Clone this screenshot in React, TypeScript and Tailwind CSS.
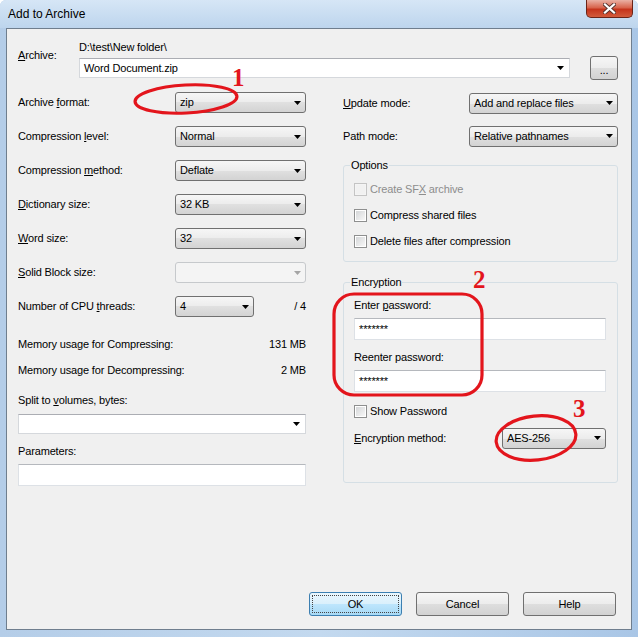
import React from 'react';
import clsx from 'clsx';

const Arrow = ({ disabled }: { disabled?: boolean }) => (
  <svg width="7" height="4" viewBox="0 0 7 4" className="shrink-0">
    <path d="M0 0h7L3.5 4z" fill={disabled ? '#a5a5a5' : '#000'} />
  </svg>
);

const Drop = ({ value, className, disabled }: { value?: string; className: string; disabled?: boolean }) => (
  <div
    className={clsx(
      'flex h-[21px] items-center justify-between rounded-[3px] border pl-[4px] pr-[4px]',
      disabled
        ? 'border-[#c6c9cc] bg-[#f4f4f4]'
        : 'border-[#707070] bg-[linear-gradient(#f6f6f6_0%,#ececec_50%,#e0e0e0_50%,#d3d3d3_100%)]',
      className
    )}
  >
    <span>{value}</span>
    <Arrow disabled={disabled} />
  </div>
);

const Combo = ({ value, className }: { value?: string; className: string }) => (
  <div
    className={clsx(
      'flex h-[20px] items-center justify-between border border-[#d5d8dc] border-t-[#abadb3] bg-white pl-[4px] pr-[5px]',
      className
    )}
  >
    <span>{value}</span>
    <Arrow />
  </div>
);

const Check = ({ label, disabled }: { label: React.ReactNode; disabled?: boolean }) => (
  <div className="flex h-[13px] items-center">
    <div
      className={clsx(
        'h-[13px] w-[13px] shrink-0 border p-[1px]',
        disabled ? 'border-[#c4c4c4] bg-[#f4f4f4]' : 'border-[#8e8f8f] bg-white'
      )}
    >
      <div
        className={clsx(
          'h-full w-full',
          disabled ? 'bg-[#f1f1f1]' : 'bg-[linear-gradient(135deg,#d4d6d8,#f7f7f7)]'
        )}
      />
    </div>
    <span className={clsx('ml-[3px]', disabled && 'text-[#8d8d8d]')}>{label}</span>
  </div>
);

const Button = ({ children, primary }: { children: React.ReactNode; primary?: boolean }) => (
  <div
    className={clsx(
      'flex h-[24px] w-[93px] items-center justify-center rounded-[3px] border',
      primary
        ? 'border-[#3c7fb1] bg-[linear-gradient(#eaf6fd_0%,#d9f0fc_50%,#bee6fd_50%,#a7d9f5_100%)] p-[2px]'
        : 'border-[#707070] bg-[linear-gradient(#f6f6f6_0%,#ececec_50%,#dedede_50%,#d2d2d2_100%)]'
    )}
  >
    {primary ? (
      <div className="flex h-full w-full items-center justify-center border border-dotted border-[#444]">{children}</div>
    ) : (
      children
    )}
  </div>
);

const Field = ({ value }: { value?: string }) => (
  <div className="flex h-[22px] w-full items-center border border-[#dde1e6] border-t-[#b5b8bd] bg-white pl-[4px]">
    {value}
  </div>
);

const CloseButton = () => (
  <div className="mr-[5px] flex h-[18px] w-[47px] items-center justify-center rounded-b-[5px] border border-t-0 border-[#6b2418] bg-[linear-gradient(#eab1a4_0%,#d8644c_45%,#c5341c_55%,#d25b3c_100%)]">
    <svg width="13" height="11" viewBox="0 0 13 11">
      <path d="M2 1.5L11 9.5M11 1.5L2 9.5" stroke="#5a3530" strokeWidth="4" strokeLinecap="square" />
      <path d="M2 1.5L11 9.5M11 1.5L2 9.5" stroke="#fff" strokeWidth="2.2" strokeLinecap="square" />
    </svg>
  </div>
);

export default function App() {
  const leftRows: { label: React.ReactNode; value?: string; disabled?: boolean }[] = [
    { label: <>Archive <u>f</u>ormat:</>, value: 'zip' },
    { label: <>Compression <u>l</u>evel:</>, value: 'Normal' },
    { label: <>Compression <u>m</u>ethod:</>, value: 'Deflate' },
    { label: <><u>D</u>ictionary size:</>, value: '32 KB' },
    { label: <><u>W</u>ord size:</>, value: '32' },
    { label: <><u>S</u>olid Block size:</>, disabled: true },
  ];

  return (
    <div className="relative h-[637px] w-[638px] overflow-hidden rounded-t-[6px] bg-[linear-gradient(90deg,#b4cde8,#c3d9ef_50%,#a9c6e6)] font-['Liberation_Sans',Arial,sans-serif] text-[11px] leading-[13px] tracking-[-0.15px] text-black">
      {/* title bar */}
      <div className="flex h-[28px] items-start justify-between bg-[linear-gradient(#d6e6f6,#bdd5ed)]">
        <span className="ml-[8px] mt-[7px] text-[12px] leading-[14px] tracking-normal">Add to Archive</span>
        <CloseButton />
      </div>

      {/* client area */}
      <div className="mx-[6px] flex h-[602px] flex-col border border-[#6f7e8e] bg-[#f0f0f0] pb-[13px] pl-[11px] pr-[13px] pt-[12px]">
        {/* archive name */}
        <div className="flex items-start">
          <div className="mt-[8px] w-[61px]">
            <u>A</u>rchive:
          </div>
          <div className="flex flex-col">
            <div className="h-[13px]">D:\test\New folder\</div>
            <Combo value="Word Document.zip" className="mt-[4px] w-[491px]" />
          </div>
          <div className="ml-[20px] mt-[15px] flex h-[24px] w-[28px] items-end justify-center rounded-[3px] border border-[#707070] bg-[linear-gradient(#f6f6f6_0%,#ececec_50%,#dedede_50%,#d2d2d2_100%)] pb-[5px] leading-[8px]">
            ...
          </div>
        </div>

        <div className="mt-[12px] flex">
          {/* left column */}
          <div className="flex w-[288px] flex-col">
            <div className="flex flex-col gap-[13px]">
              {leftRows.map((r, i) => (
                <div key={i} className="flex h-[21px] items-center">
                  <div className="w-[157px]">{r.label}</div>
                  <Drop value={r.value} disabled={r.disabled} className="w-[131px]" />
                </div>
              ))}
              <div className="flex h-[21px] items-center">
                <div className="w-[157px]">
                  Number of CPU <u>t</u>hreads:
                </div>
                <Drop value="4" className="w-[79px]" />
                <span className="ml-auto">/ 4</span>
              </div>
            </div>
            <div className="mt-[21px] flex h-[13px] justify-between">
              <span>Memory usage for Compressing:</span>
              <span>131 MB</span>
            </div>
            <div className="mt-[13px] flex h-[13px] justify-between">
              <span>Memory usage for Decompressing:</span>
              <span>2 MB</span>
            </div>
            <div className="mt-[17px] h-[13px]">
              Split to <u>v</u>olumes, bytes:
            </div>
            <Combo className="mt-[7px] w-full" />
            <div className="mt-[11px] h-[13px]">Parameters:</div>
            <div className="mt-[6px]">
              <Field />
            </div>
          </div>

          {/* right column */}
          <div className="ml-[37px] flex w-[275px] flex-col">
            <div className="mt-[1px] flex h-[20px] items-center">
              <div className="w-[126px]">
                <u>U</u>pdate mode:
              </div>
              <Drop value="Add and replace files" className="h-[20px] w-[149px]" />
            </div>
            <div className="mt-[13px] flex h-[20px] items-center">
              <div className="w-[126px]">Path mode:</div>
              <Drop value="Relative pathnames" className="h-[20px] w-[149px]" />
            </div>

            <fieldset className="mt-[13px] rounded-[3px] border border-[#d5dfe5]">
              <legend className="ml-[6px] px-[1px] leading-[13px]">Options</legend>
              <div className="flex flex-col gap-[13px] pb-[13px] pl-[10px] pt-[11px]">
                <Check disabled label={<>Create SF<u>X</u> archive</>} />
                <Check label="Compress shared files" />
                <Check label="Delete files after compression" />
              </div>
            </fieldset>

            <fieldset className="mt-[14px] rounded-[3px] border border-[#d5dfe5]">
              <legend className="ml-[6px] px-[1px] leading-[13px]">Encryption</legend>
              <div className="flex flex-col pb-[34px] pl-[10px] pr-[11px] pt-[10px]">
                <div className="h-[13px]">
                  Enter <u>p</u>assword:
                </div>
                <div className="mt-[6px]">
                  <Field value="*******" />
                </div>
                <div className="mt-[11px] h-[13px]">Reenter password:</div>
                <div className="mt-[6px]">
                  <Field value="*******" />
                </div>
                <div className="mt-[13px]">
                  <Check label="Show Password" />
                </div>
                <div className="mt-[10px] flex h-[20px] items-center justify-between">
                  <span>
                    <u>E</u>ncryption method:
                  </span>
                  <Drop value="AES-256" className="h-[20px] w-[104px]" />
                </div>
              </div>
            </fieldset>
          </div>
        </div>

        {/* buttons */}
        <div className="mr-[2px] mt-auto flex justify-end gap-[14px]">
          <Button primary>OK</Button>
          <Button>Cancel</Button>
          <Button>Help</Button>
        </div>
      </div>

      {/* red annotations drawn over the dialog */}
      <svg className="pointer-events-none absolute left-0 top-0" width="638" height="637" viewBox="0 0 638 637">
        <g fill="none" stroke="#e3151c" strokeWidth="3.2">
          <ellipse cx="186" cy="99" rx="51" ry="14" transform="rotate(-3 186 99)" />
          <rect x="334" y="294" width="148" height="101" rx="20" />
          <ellipse cx="536" cy="438" rx="40" ry="22" transform="rotate(-6 536 438)" />
        </g>
      </svg>
      <span className="pointer-events-none absolute left-[232px] top-[65px] font-['Liberation_Serif',serif] text-[25px] font-bold leading-[25px] text-[#e3151c]">
        1
      </span>
      <span className="pointer-events-none absolute left-[473px] top-[267px] font-['Liberation_Serif',serif] text-[25px] font-bold leading-[25px] text-[#e3151c]">
        2
      </span>
      <span className="pointer-events-none absolute left-[573px] top-[396px] font-['Liberation_Serif',serif] text-[25px] font-bold leading-[25px] text-[#e3151c]">
        3
      </span>
    </div>
  );
}
